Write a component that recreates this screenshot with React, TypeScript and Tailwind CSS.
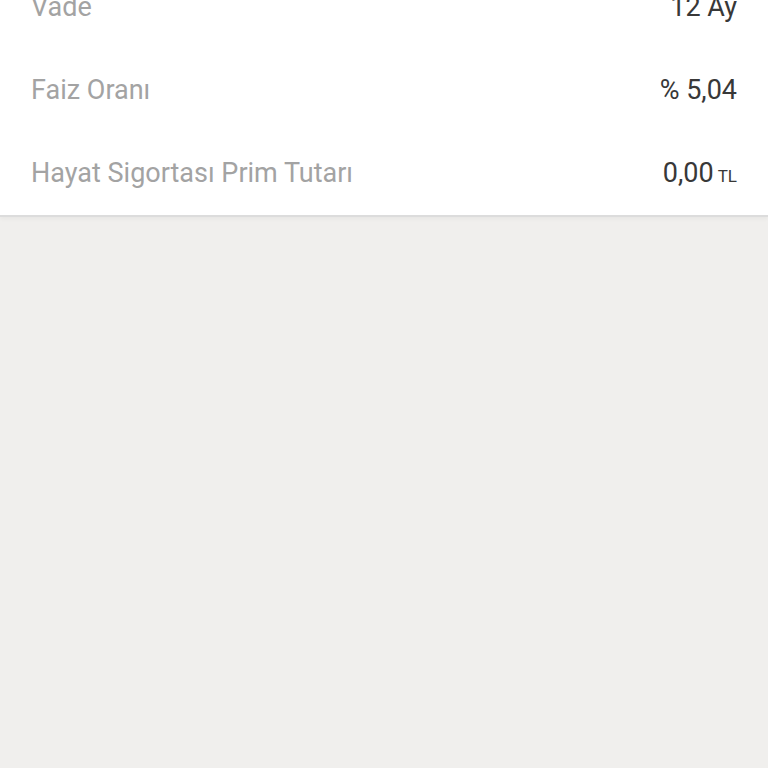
import React from 'react';

const rows = [
  { label: 'Vade', value: '12 Ay', unit: '' },
  { label: 'Faiz Oranı', value: '% 5,04', unit: '' },
  { label: 'Hayat Sigortası Prim Tutarı', value: '0,00', unit: 'TL' },
];

const App: React.FC = () => {
  return (
    <div
      className="min-h-[768px] h-[768px] overflow-hidden bg-[#f0efed]"
      style={{ fontFamily: 'Roboto, "Noto Sans", sans-serif' }}
    >
      <div className="-mt-[34px] bg-white border-b-2 border-[#dcdcdc] shadow-[0_2px_4px_rgba(0,0,0,0.04)]">
        {rows.map((row) => (
          <div key={row.label} className="flex h-[83px] items-center justify-between px-[31px]">
            <span className="text-[27px] text-[#a3a3a3]">{row.label}</span>
            <span className="text-[27px] text-[#383838]">
              {row.value}
              {row.unit && <span className="ml-[4px] text-[17px]">{row.unit}</span>}
            </span>
          </div>
        ))}
      </div>
    </div>
  );
};

export default App;
